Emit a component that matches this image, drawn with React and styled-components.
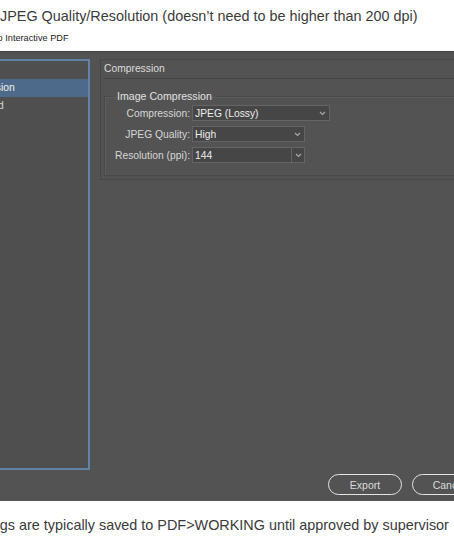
import React from "react";
import styled, { createGlobalStyle } from "styled-components";

const Global = createGlobalStyle`
  html, body {
    margin: 0;
    padding: 0;
    background: #ffffff;
  }
`;

const Page = styled.div`
  width: 454px;
  height: 550px;
  overflow: hidden;
  background: #ffffff;
  font-family: "Liberation Sans", Arial, sans-serif;
`;

const Caption = styled.div`
  font-size: 14.4px;
  line-height: 18px;
  color: #3a3a3a;
  white-space: nowrap;
  padding-top: ${({ top }) => top || 0}px;
  margin-left: ${({ shift }) => shift || 0}px;
`;

const WindowTitle = styled.div`
  height: 26px;
  line-height: 26px;
  font-size: 9.2px;
  color: #222;
  white-space: nowrap;
  margin-left: -5px;
`;

const Dialog = styled.div`
  width: 560px;
  height: 450px;
  margin-left: -60px;
  background: #535353;
  border-top: 1px solid #3f3f3f;
  box-sizing: border-box;
  display: flex;
  flex-direction: column;
  font-family: "Liberation Sans", Arial, sans-serif;
  font-size: 10.3px;
  color: #d6d6d6;
`;

const Body = styled.div`
  flex: 1;
  display: flex;
  padding: 7px 0 0 8px;
  gap: 10px;
`;

const Sidebar = styled.div`
  width: 142px;
  height: 411px;
  box-sizing: border-box;
  border: 2px solid #6282a6;
  background: #4f4f4f;
  display: flex;
  flex-direction: column;
`;

const NavItem = styled.div`
  height: 18px;
  line-height: 18px;
  padding-left: ${({ indent }) => indent}px;
  white-space: nowrap;
  color: ${({ active }) => (active ? "#f2f2f2" : "#d6d6d6")};
  background: ${({ active }) => (active ? "#4e6a8a" : "transparent")};
`;

const Main = styled.div`
  flex: 1;
  display: flex;
  flex-direction: column;
`;

const Section = styled.div`
  border: 1px solid #474747;
  border-right: none;
  padding: 0 0 3px 3px;
`;

const SectionHeader = styled.div`
  height: 18px;
  line-height: 18px;
  color: #dcdcdc;
  border-bottom: 1px solid #464646;
  margin-left: -1px;
  padding-left: 1px;
`;

const Group = styled.fieldset`
  margin: 11px 0 0 0;
  padding: 3px 0 12px 0;
  border: 1px solid #4a4a4a;
  border-right: none;
  box-shadow: inset 1px 1px 0 #5c5c5c;
  display: grid;
  grid-template-columns: 85px auto;
  grid-auto-rows: 16px;
  row-gap: 5px;
  column-gap: 2px;
  align-items: center;
  justify-items: start;
`;

const Legend = styled.legend`
  margin-left: 8px;
  padding: 0 4px;
  font-size: 10.6px;
  line-height: 12px;
  color: #e0e0e0;
`;

const Label = styled.span`
  justify-self: end;
  white-space: nowrap;
  color: #d6d6d6;
`;

const Select = styled.div`
  width: ${({ w }) => w}px;
  height: 16px;
  box-sizing: border-box;
  border: 1px solid #646464;
  background: #464646;
  display: flex;
  align-items: center;
  color: #ececec;
`;

const Value = styled.span`
  flex: 1;
  padding-left: 2px;
  white-space: nowrap;
`;

const Arrow = styled.span`
  width: ${({ split }) => (split ? 12 : 14)}px;
  height: 100%;
  display: flex;
  align-items: center;
  justify-content: center;
  border-left: ${({ split }) => (split ? "1px solid #646464" : "none")};
`;

const Footer = styled.div`
  display: flex;
  justify-content: flex-end;
  gap: 10px;
  padding: 0 14px 6px 0;
`;

const Button = styled.button`
  width: 74px;
  height: 21px;
  border: 1.5px solid #e4e4e4;
  border-radius: 11px;
  background: transparent;
  color: #dadada;
  font-family: "Liberation Sans", Arial, sans-serif;
  font-size: 10.5px;
  padding: 0;
`;

const Chevron = () => (
  <svg width="7" height="5" viewBox="0 0 7 5">
    <polyline points="1,1 3.5,3.5 6,1" fill="none" stroke="#a8a8a8" strokeWidth="1.2" />
  </svg>
);

const Dropdown = ({ value, w, split }) => (
  <Select w={w}>
    <Value>{value}</Value>
    <Arrow split={split}>
      <Chevron />
    </Arrow>
  </Select>
);

export default function App() {
  return (
    <Page>
      <Global />
      <Caption top={7}>JPEG Quality/Resolution (doesn’t need to be higher than 200 dpi)</Caption>
      <WindowTitle>to Interactive PDF</WindowTitle>
      <Dialog>
        <Body>
          <Sidebar>
            <NavItem indent={4}>General</NavItem>
            <NavItem indent={4} active>Compression</NavItem>
            <NavItem indent={8}>Advanced</NavItem>
          </Sidebar>
          <Main>
            <Section>
              <SectionHeader>Compression</SectionHeader>
              <Group>
                <Legend>Image Compression</Legend>
                <Label>Compression:</Label>
                <Dropdown value="JPEG (Lossy)" w={138} />
                <Label>JPEG Quality:</Label>
                <Dropdown value="High" w={113} />
                <Label>Resolution (ppi):</Label>
                <Dropdown value="144" w={113} split />
              </Group>
            </Section>
          </Main>
        </Body>
        <Footer>
          <Button>Export</Button>
          <Button>Cancel</Button>
        </Footer>
      </Dialog>
      <Caption top={15} shift={-37}>Settings are typically saved to PDF&gt;WORKING until approved by supervisor</Caption>
    </Page>
  );
}
